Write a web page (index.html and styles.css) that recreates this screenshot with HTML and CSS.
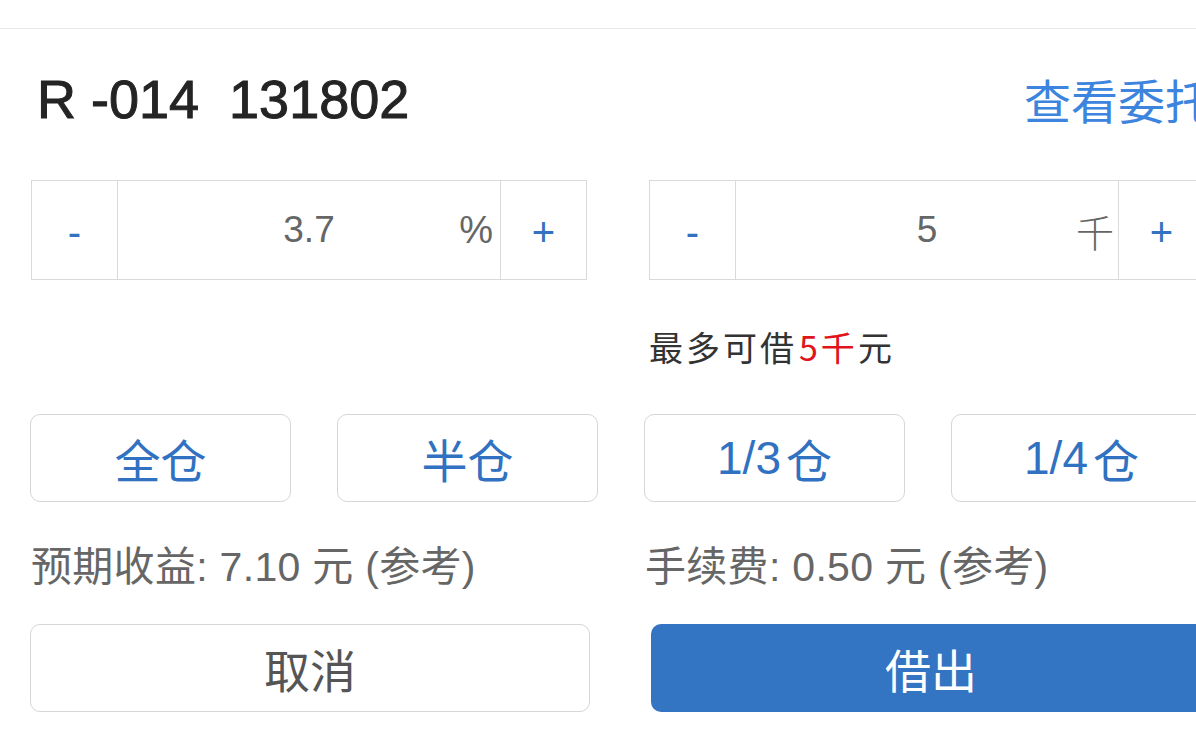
FILE: index.html
```html
<!DOCTYPE html>
<html lang="zh-CN">
<head>
<meta charset="utf-8">
<title>借出</title>
<link rel="stylesheet" href="styles.css">
</head>
<body>
<div class="page">
  <div class="topbar"></div>
  <div class="header">
    <div class="title">R -014&nbsp;&nbsp;131802</div>
    <div class="link">查看委托</div>
  </div>

  <div class="steppers">
    <div class="stepper">
      <div class="step-btn">-</div>
      <div class="step-input"><span class="value">3.7</span><span class="unit">%</span></div>
      <div class="step-btn">+</div>
    </div>
    <div class="stepper">
      <div class="step-btn">-</div>
      <div class="step-input"><span class="value">5</span><span class="unit cjk">千</span></div>
      <div class="step-btn">+</div>
    </div>
  </div>

  <div class="hint-row">
    <div></div>
    <div class="hint">最多可借<span class="red">5千</span>元</div>
  </div>

  <div class="quick">
    <div class="qbtn">全仓</div>
    <div class="qbtn">半仓</div>
    <div class="qbtn">1/3<span class="thin"></span>仓</div>
    <div class="qbtn">1/4<span class="thin"></span>仓</div>
  </div>

  <div class="info">
    <div class="info-text">预期收益: 7.10 元 (参考)</div>
    <div class="info-text">手续费: 0.50 元 (参考)</div>
  </div>

  <div class="actions">
    <div class="abtn cancel">取消</div>
    <div class="abtn primary">借出</div>
  </div>
</div>
</body>
</html>
```

FILE: styles.css
```css
html, body {
  margin: 0;
  padding: 0;
  background: #ffffff;
  overflow: hidden;
}

body {
  width: 1196px;
  height: 730px;
  font-family: "Liberation Sans", "Noto Sans CJK SC", sans-serif;
}

.page {
  width: 1182px;
  padding: 0 30px;
}

.topbar {
  height: 28px;
  border-bottom: 1px solid #e8e8e8;
  margin: 0 -30px;
}

.header {
  display: flex;
  justify-content: space-between;
  align-items: center;
  padding-top: 40px;
  height: 60px;
}

.title {
  font-size: 54px;
  line-height: 60px;
  color: #242424;
  padding-left: 7px;
  -webkit-text-stroke: 1px #242424;
}

.link {
  font-size: 47px;
  line-height: 60px;
  color: #3c84dd;
  font-family: "Noto Sans CJK SC", sans-serif;
  white-space: nowrap;
}

.steppers {
  display: grid;
  grid-template-columns: 556px 556px;
  column-gap: 62px;
  margin-top: 51px;
  padding-left: 1px;
}

.stepper {
  display: grid;
  grid-template-columns: 85px 1fr 85px;
  height: 98px;
  border: 1px solid #d9d9d9;
}

.step-btn {
  display: flex;
  align-items: center;
  justify-content: center;
  color: #3272c0;
  font-size: 40px;
  padding-top: 4px;
}

.step-input {
  position: relative;
  display: flex;
  align-items: center;
  justify-content: center;
  border-left: 1px solid #d9d9d9;
  border-right: 1px solid #d9d9d9;
  color: #666666;
}

.value {
  font-size: 37px;
}

.unit {
  position: absolute;
  right: 7px;
  top: 50%;
  transform: translateY(-50%);
  font-size: 38px;
}

.unit.cjk {
  font-family: "Noto Sans CJK SC", sans-serif;
  font-weight: 300;
  right: 4px;
}

.hint-row {
  display: grid;
  grid-template-columns: 556px 556px;
  column-gap: 62px;
  padding-left: 1px;
  height: 134px;
  align-items: start;
}

.hint {
  margin-top: 47px;
  font-size: 34px;
  letter-spacing: 3px;
  line-height: 40px;
  color: #333333;
  font-family: "Noto Sans CJK SC", sans-serif;
}

.red {
  color: #e0141a;
  margin-left: 2px;
}

.quick {
  display: grid;
  grid-template-columns: repeat(4, 261px);
  column-gap: 46px;
}

.qbtn {
  height: 86px;
  border: 1px solid #d6d6d6;
  border-radius: 10px;
  display: flex;
  align-items: center;
  justify-content: center;
  color: #3071c1;
  font-size: 46px;
}

.thin {
  display: inline-block;
  width: 5px;
}

.info {
  display: grid;
  grid-template-columns: 568px 568px;
  column-gap: 46px;
  height: 122px;
  align-items: center;
}

.info-text {
  font-size: 41px;
  letter-spacing: 0.3px;
  color: #666666;
  padding-left: 1px;
  white-space: nowrap;
}

.actions {
  display: grid;
  grid-template-columns: 560px 560px;
  column-gap: 61px;
}

.abtn {
  height: 86px;
  border-radius: 10px;
  display: flex;
  align-items: center;
  justify-content: center;
  font-size: 46px;
  font-family: "Noto Sans CJK SC", sans-serif;
}

.cancel {
  border: 1px solid #d6d6d6;
  color: #555555;
}

.primary {
  background: #3374c3;
  color: #ffffff;
  height: 88px;
}
```
